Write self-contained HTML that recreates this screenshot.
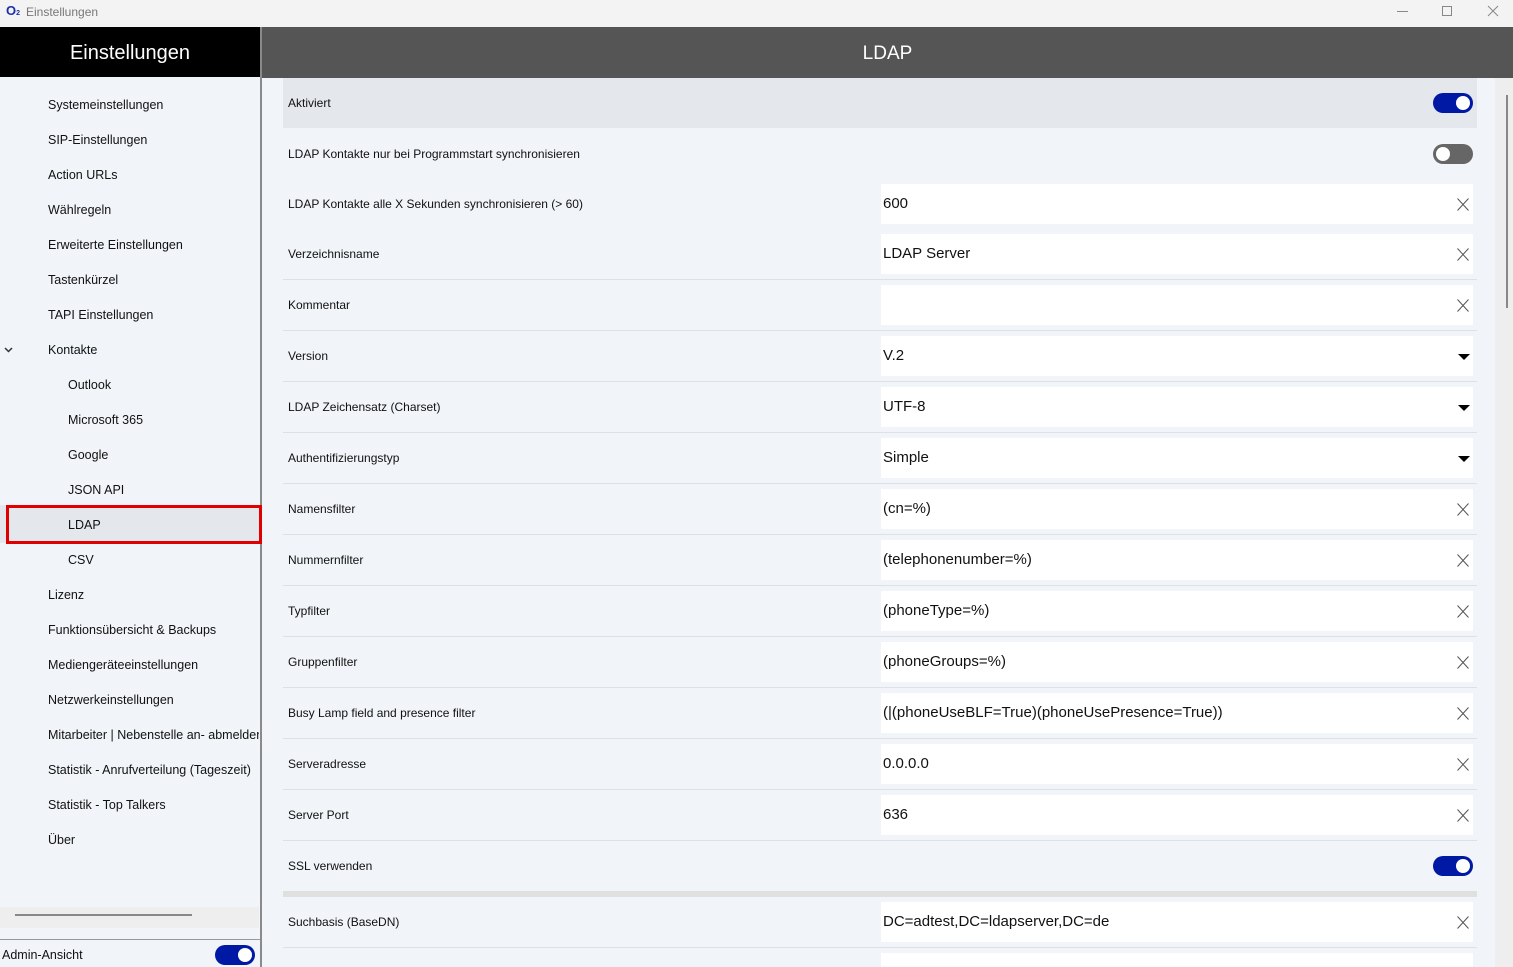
<!DOCTYPE html>
<html style="overflow:hidden;height:967px"><head><meta charset="utf-8"><style>
*{margin:0;padding:0;box-sizing:border-box}
body{width:1513px;height:967px;overflow:hidden;background:#f1f4f8;font-family:"Liberation Sans",sans-serif;color:#111;position:relative}
.a{position:absolute}
.tb{left:0;top:0;width:1513px;height:27px;background:#f3f3f3}
.side{left:0;top:77px;width:260px;height:890px;background:#f1f4f8}
.si{position:absolute;font-size:12.5px;white-space:nowrap}
.lbl{position:absolute;left:288px;font-size:12px;white-space:nowrap}
.inp{position:absolute;left:881px;width:592px;height:40px;background:#fff;font-size:15px;padding-left:2px;line-height:40px;white-space:nowrap}
.x{position:absolute;right:4px;top:14px;width:12px;height:13px}
.dd{position:absolute;right:3px;top:18px;width:0;height:0;border-left:6px solid transparent;border-right:6px solid transparent;border-top:6px solid #000}
.ln{position:absolute;left:283px;width:1194px;height:1px;background:#dde1e6}
.tg{position:absolute;width:40px;height:20px;border-radius:10px}
.tg i{position:absolute;top:3px;width:14px;height:14px;border-radius:50%;background:#fff}
</style></head><body>
<div class="a tb"></div>
<div class="a" style="left:6px;top:3px;font-size:13px;font-weight:bold;color:#1a2fa8">O<span style="font-size:7px">2</span></div>
<div class="a" style="left:26px;top:5px;font-size:12px;color:#777">Einstellungen</div>
<div class="a" style="left:1397px;top:11px;width:11px;height:1px;background:#888"></div>
<div class="a" style="left:1442px;top:6px;width:10px;height:10px;border:1px solid #888"></div>
<svg class="a" style="left:1487px;top:5px" width="12" height="12"><path d="M1 1L11 11M11 1L1 11" stroke="#888" stroke-width="1"/></svg>

<div class="a" style="left:0;top:27px;width:260px;height:50px;background:#000;color:#fff;font-size:20px;text-align:center;line-height:52px">Einstellungen</div>
<div class="a" style="left:260px;top:27px;width:2px;height:940px;background:#8a8a8a"></div>
<div class="a" style="left:262px;top:27px;width:1251px;height:51px;background:#555;color:#fff;font-size:19px;text-align:center;line-height:53px">LDAP</div>

<div class="a side"></div>
<div class="a" style="left:0;top:505px;width:260px;height:38px;background:#e4e7eb"></div>
<div class="a" style="left:6px;top:505px;width:256px;height:39px;border:3px solid #e10000"></div>
<div class="si" style="left:48px;top:98px">Systemeinstellungen</div>
<div class="si" style="left:48px;top:133px">SIP-Einstellungen</div>
<div class="si" style="left:48px;top:168px">Action URLs</div>
<div class="si" style="left:48px;top:203px">Wählregeln</div>
<div class="si" style="left:48px;top:238px">Erweiterte Einstellungen</div>
<div class="si" style="left:48px;top:273px">Tastenkürzel</div>
<div class="si" style="left:48px;top:308px">TAPI Einstellungen</div>
<svg class="a" style="left:4px;top:347px" width="9" height="6"><path d="M1 1L4.5 4.5L8 1" stroke="#333" stroke-width="1.5" fill="none"/></svg>
<div class="si" style="left:48px;top:343px">Kontakte</div>
<div class="si" style="left:68px;top:378px">Outlook</div>
<div class="si" style="left:68px;top:413px">Microsoft 365</div>
<div class="si" style="left:68px;top:448px">Google</div>
<div class="si" style="left:68px;top:483px">JSON API</div>
<div class="si" style="left:68px;top:518px">LDAP</div>
<div class="si" style="left:68px;top:553px">CSV</div>
<div class="si" style="left:48px;top:588px">Lizenz</div>
<div class="si" style="left:48px;top:623px">Funktionsübersicht &amp; Backups</div>
<div class="si" style="left:48px;top:658px">Mediengeräteeinstellungen</div>
<div class="si" style="left:48px;top:693px">Netzwerkeinstellungen</div>
<div class="a" style="left:0;top:720px;width:259px;height:140px;overflow:hidden">
<div class="si" style="left:48px;top:8px">Mitarbeiter | Nebenstelle an- abmelden</div>
<div class="si" style="left:48px;top:43px">Statistik - Anrufverteilung (Tageszeit)</div>
<div class="si" style="left:48px;top:78px">Statistik - Top Talkers</div>
<div class="si" style="left:48px;top:113px">Über</div></div>
<div class="a" style="left:0;top:907px;width:259px;height:21px;background:#eee"></div>
<div class="a" style="left:15px;top:914px;width:177px;height:2px;background:#888"></div>
<div class="a" style="left:0;top:939px;width:260px;height:1px;background:#999"></div>
<div class="si" style="left:2px;top:948px">Admin-Ansicht</div>
<div class="tg" style="left:215px;top:945px;background:#0019a5"><i style="left:23px"></i></div>

<div class="a" style="left:1495px;top:78px;width:18px;height:889px;background:#eee"></div>
<div class="a" style="left:1506px;top:95px;width:2px;height:213px;background:#888"></div>

<div class="a" style="left:283px;top:78px;width:1194px;height:50px;background:#e4e7eb"></div>
<div class="lbl" style="top:96px">Aktiviert</div>
<div class="tg" style="left:1433px;top:93px;background:#0019a5"><i style="left:23px"></i></div>
<div class="lbl" style="top:147px">LDAP Kontakte nur bei Programmstart synchronisieren</div>
<div class="tg" style="left:1433px;top:144px;background:#666"><i style="left:3px"></i></div>
<div class="lbl" style="top:197px">LDAP Kontakte alle X Sekunden synchronisieren (&gt; 60)</div>
<div class="inp" style="top:184px">600<svg class="x" viewBox="0 0 12 13"><path d="M0.5 0.5L11.5 12.5M11.5 0.5L0.5 12.5" stroke="#555" stroke-width="1"/></svg></div>
<div class="lbl" style="top:247px">Verzeichnisname</div>
<div class="inp" style="top:234px">LDAP Server<svg class="x" viewBox="0 0 12 13"><path d="M0.5 0.5L11.5 12.5M11.5 0.5L0.5 12.5" stroke="#555" stroke-width="1"/></svg></div>
<div class="ln" style="top:279px"></div>
<div class="lbl" style="top:298px">Kommentar</div>
<div class="inp" style="top:285px"><svg class="x" viewBox="0 0 12 13"><path d="M0.5 0.5L11.5 12.5M11.5 0.5L0.5 12.5" stroke="#555" stroke-width="1"/></svg></div>
<div class="ln" style="top:330px"></div>
<div class="lbl" style="top:349px">Version</div>
<div class="inp" style="top:336px">V.2<span class="dd"></span></div>
<div class="ln" style="top:381px"></div>
<div class="lbl" style="top:400px">LDAP Zeichensatz (Charset)</div>
<div class="inp" style="top:387px">UTF-8<span class="dd"></span></div>
<div class="ln" style="top:432px"></div>
<div class="lbl" style="top:451px">Authentifizierungstyp</div>
<div class="inp" style="top:438px">Simple<span class="dd"></span></div>
<div class="ln" style="top:483px"></div>
<div class="lbl" style="top:502px">Namensfilter</div>
<div class="inp" style="top:489px">(cn=%)<svg class="x" viewBox="0 0 12 13"><path d="M0.5 0.5L11.5 12.5M11.5 0.5L0.5 12.5" stroke="#555" stroke-width="1"/></svg></div>
<div class="ln" style="top:534px"></div>
<div class="lbl" style="top:553px">Nummernfilter</div>
<div class="inp" style="top:540px">(telephonenumber=%)<svg class="x" viewBox="0 0 12 13"><path d="M0.5 0.5L11.5 12.5M11.5 0.5L0.5 12.5" stroke="#555" stroke-width="1"/></svg></div>
<div class="ln" style="top:585px"></div>
<div class="lbl" style="top:604px">Typfilter</div>
<div class="inp" style="top:591px">(phoneType=%)<svg class="x" viewBox="0 0 12 13"><path d="M0.5 0.5L11.5 12.5M11.5 0.5L0.5 12.5" stroke="#555" stroke-width="1"/></svg></div>
<div class="ln" style="top:636px"></div>
<div class="lbl" style="top:655px">Gruppenfilter</div>
<div class="inp" style="top:642px">(phoneGroups=%)<svg class="x" viewBox="0 0 12 13"><path d="M0.5 0.5L11.5 12.5M11.5 0.5L0.5 12.5" stroke="#555" stroke-width="1"/></svg></div>
<div class="ln" style="top:687px"></div>
<div class="lbl" style="top:706px">Busy Lamp field and presence filter</div>
<div class="inp" style="top:693px">(|(phoneUseBLF=True)(phoneUsePresence=True))<svg class="x" viewBox="0 0 12 13"><path d="M0.5 0.5L11.5 12.5M11.5 0.5L0.5 12.5" stroke="#555" stroke-width="1"/></svg></div>
<div class="ln" style="top:738px"></div>
<div class="lbl" style="top:757px">Serveradresse</div>
<div class="inp" style="top:744px">0.0.0.0<svg class="x" viewBox="0 0 12 13"><path d="M0.5 0.5L11.5 12.5M11.5 0.5L0.5 12.5" stroke="#555" stroke-width="1"/></svg></div>
<div class="ln" style="top:789px"></div>
<div class="lbl" style="top:808px">Server Port</div>
<div class="inp" style="top:795px">636<svg class="x" viewBox="0 0 12 13"><path d="M0.5 0.5L11.5 12.5M11.5 0.5L0.5 12.5" stroke="#555" stroke-width="1"/></svg></div>
<div class="ln" style="top:840px"></div>
<div class="lbl" style="top:859px">SSL verwenden</div>
<div class="tg" style="left:1433px;top:856px;background:#0019a5"><i style="left:23px"></i></div>
<div class="a" style="left:283px;top:891px;width:1194px;height:6px;background:#e0e0e0"></div>
<div class="lbl" style="top:915px">Suchbasis (BaseDN)</div>
<div class="inp" style="top:902px">DC=adtest,DC=ldapserver,DC=de<svg class="x" viewBox="0 0 12 13"><path d="M0.5 0.5L11.5 12.5M11.5 0.5L0.5 12.5" stroke="#555" stroke-width="1"/></svg></div>
<div class="ln" style="top:947px"></div>
<div class="inp" style="top:953px;height:14px"></div>
</body></html>
